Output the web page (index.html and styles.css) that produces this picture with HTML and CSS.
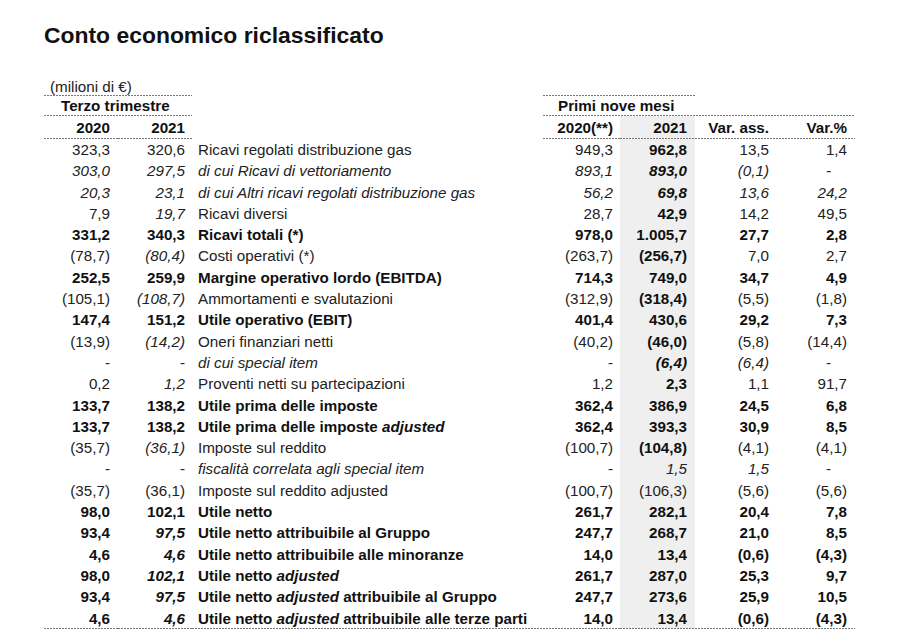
FILE: index.html
```html
<!DOCTYPE html>
<html lang="it">
<head>
<meta charset="utf-8">
<title>Conto economico riclassificato</title>
<link rel="stylesheet" href="styles.css">
</head>
<body>
<div class="page">
  <h1 class="title">Conto economico riclassificato</h1>
  <table class="ce">
    <colgroup>
      <col class="w-q"><col class="w-q2"><col class="w-label"><col class="w-p1"><col class="w-p2"><col class="w-v1"><col class="w-v2">
    </colgroup>
    <thead>
      <tr class="h-a">
        <td colspan="2" class="unit dl">(milioni di €)</td>
        <td></td>
        <td colspan="2" class="dl"></td>
        <td colspan="2"></td>
      </tr>
      <tr class="h-b">
        <td colspan="2" class="grp grp-l dl">Terzo trimestre</td>
        <td></td>
        <td colspan="4" class="grp grp-r dl">Primi nove mesi</td>
      </tr>
      <tr class="h-c">
        <th class="n1 dl">2020</th>
        <th class="n2 dl">2021</th>
        <th></th>
        <th class="n4 dl">2020(**)</th>
        <th class="n5 sh dl">2021</th>
        <th class="n6 dl">Var. ass.</th>
        <th class="n7 dl">Var.%</th>
      </tr>
    </thead>
    <tbody>
      <tr><td class="n1">323,3</td><td class="n2">320,6</td><td class="lb">Ricavi regolati distribuzione gas</td><td class="n4">949,3</td><td class="n5 sh b">962,8</td><td class="n6">13,5</td><td class="n7">1,4</td></tr>
      <tr class="i"><td class="n1">303,0</td><td class="n2">297,5</td><td class="lb">di cui Ricavi di vettoriamento</td><td class="n4">893,1</td><td class="n5 sh b">893,0</td><td class="n6">(0,1)</td><td class="n7 dash">-</td></tr>
      <tr class="i"><td class="n1">20,3</td><td class="n2">23,1</td><td class="lb">di cui Altri ricavi regolati distribuzione gas</td><td class="n4">56,2</td><td class="n5 sh b">69,8</td><td class="n6">13,6</td><td class="n7">24,2</td></tr>
      <tr><td class="n1">7,9</td><td class="n2 i">19,7</td><td class="lb">Ricavi diversi</td><td class="n4">28,7</td><td class="n5 sh b">42,9</td><td class="n6">14,2</td><td class="n7">49,5</td></tr>
      <tr class="b"><td class="n1">331,2</td><td class="n2">340,3</td><td class="lb">Ricavi totali (*)</td><td class="n4">978,0</td><td class="n5 sh">1.005,7</td><td class="n6">27,7</td><td class="n7">2,8</td></tr>
      <tr><td class="n1">(78,7)</td><td class="n2 i">(80,4)</td><td class="lb">Costi operativi (*)</td><td class="n4">(263,7)</td><td class="n5 sh b">(256,7)</td><td class="n6">7,0</td><td class="n7">2,7</td></tr>
      <tr class="b"><td class="n1">252,5</td><td class="n2">259,9</td><td class="lb">Margine operativo lordo (EBITDA)</td><td class="n4">714,3</td><td class="n5 sh">749,0</td><td class="n6">34,7</td><td class="n7">4,9</td></tr>
      <tr><td class="n1">(105,1)</td><td class="n2 i">(108,7)</td><td class="lb">Ammortamenti e svalutazioni</td><td class="n4">(312,9)</td><td class="n5 sh b">(318,4)</td><td class="n6">(5,5)</td><td class="n7">(1,8)</td></tr>
      <tr class="b"><td class="n1">147,4</td><td class="n2">151,2</td><td class="lb">Utile operativo (EBIT)</td><td class="n4">401,4</td><td class="n5 sh">430,6</td><td class="n6">29,2</td><td class="n7">7,3</td></tr>
      <tr><td class="n1">(13,9)</td><td class="n2 i">(14,2)</td><td class="lb">Oneri finanziari netti</td><td class="n4">(40,2)</td><td class="n5 sh b">(46,0)</td><td class="n6">(5,8)</td><td class="n7">(14,4)</td></tr>
      <tr><td class="n1">-</td><td class="n2">-</td><td class="lb i">di cui special item</td><td class="n4">-</td><td class="n5 sh b i">(6,4)</td><td class="n6 i">(6,4)</td><td class="n7 dash">-</td></tr>
      <tr><td class="n1">0,2</td><td class="n2 i">1,2</td><td class="lb">Proventi netti su partecipazioni</td><td class="n4">1,2</td><td class="n5 sh b">2,3</td><td class="n6">1,1</td><td class="n7">91,7</td></tr>
      <tr class="b"><td class="n1">133,7</td><td class="n2">138,2</td><td class="lb">Utile prima delle imposte</td><td class="n4">362,4</td><td class="n5 sh">386,9</td><td class="n6">24,5</td><td class="n7">6,8</td></tr>
      <tr class="b"><td class="n1">133,7</td><td class="n2">138,2</td><td class="lb">Utile prima delle imposte <i>adjusted</i></td><td class="n4">362,4</td><td class="n5 sh">393,3</td><td class="n6">30,9</td><td class="n7">8,5</td></tr>
      <tr><td class="n1">(35,7)</td><td class="n2 i">(36,1)</td><td class="lb">Imposte sul reddito</td><td class="n4">(100,7)</td><td class="n5 sh b">(104,8)</td><td class="n6">(4,1)</td><td class="n7">(4,1)</td></tr>
      <tr><td class="n1">-</td><td class="n2">-</td><td class="lb i">fiscalità correlata agli special item</td><td class="n4">-</td><td class="n5 sh i">1,5</td><td class="n6 i">1,5</td><td class="n7 dash">-</td></tr>
      <tr><td class="n1">(35,7)</td><td class="n2">(36,1)</td><td class="lb">Imposte sul reddito adjusted</td><td class="n4">(100,7)</td><td class="n5 sh">(106,3)</td><td class="n6">(5,6)</td><td class="n7">(5,6)</td></tr>
      <tr class="b"><td class="n1">98,0</td><td class="n2">102,1</td><td class="lb">Utile netto</td><td class="n4">261,7</td><td class="n5 sh">282,1</td><td class="n6">20,4</td><td class="n7">7,8</td></tr>
      <tr class="b"><td class="n1">93,4</td><td class="n2 i">97,5</td><td class="lb">Utile netto attribuibile al Gruppo</td><td class="n4">247,7</td><td class="n5 sh">268,7</td><td class="n6">21,0</td><td class="n7">8,5</td></tr>
      <tr class="b"><td class="n1">4,6</td><td class="n2 i">4,6</td><td class="lb">Utile netto attribuibile alle minoranze</td><td class="n4">14,0</td><td class="n5 sh">13,4</td><td class="n6">(0,6)</td><td class="n7">(4,3)</td></tr>
      <tr class="b"><td class="n1">98,0</td><td class="n2 i">102,1</td><td class="lb">Utile netto <i>adjusted</i></td><td class="n4">261,7</td><td class="n5 sh">287,0</td><td class="n6">25,3</td><td class="n7">9,7</td></tr>
      <tr class="b"><td class="n1">93,4</td><td class="n2 i">97,5</td><td class="lb">Utile netto <i>adjusted</i> attribuibile al Gruppo</td><td class="n4">247,7</td><td class="n5 sh">273,6</td><td class="n6">25,9</td><td class="n7">10,5</td></tr>
      <tr class="b last"><td class="n1 dl">4,6</td><td class="n2 i dl">4,6</td><td class="lb dl">Utile netto <i>adjusted</i> attribuibile alle terze parti</td><td class="n4 dl">14,0</td><td class="n5 sh dl">13,4</td><td class="n6 dl">(0,6)</td><td class="n7 dl">(4,3)</td></tr>
    </tbody>
  </table>
</div>
</body>
</html>
```
FILE: styles.css
```css
html, body {
  margin: 0;
  padding: 0;
  background: #ffffff;
}

.page {
  padding: 21px 0 0 44px;
  font-family: "Liberation Sans", Arial, sans-serif;
  color: #222222;
}

.title {
  margin: 0;
  font-size: 22.9px;
  line-height: 28px;
  font-weight: bold;
  color: #111111;
}

.ce {
  margin-top: 29px;
  border-collapse: collapse;
  table-layout: fixed;
  width: 811px;
  font-size: 15.2px;
}

.w-q { width: 74px; }
.w-q2 { width: 74px; }
.w-label { width: 351px; }
.w-p1 { width: 77px; }
.w-p2 { width: 75px; }
.w-v1 { width: 81px; }
.w-v2 { width: 79px; }

.ce td, .ce th {
  padding: 0;
  white-space: nowrap;
  vertical-align: middle;
  font-weight: normal;
}

.h-a td { height: 18px; line-height: 18px; }
.h-b td { height: 20px; line-height: 20px; }
.h-c th { height: 23px; line-height: 23px; font-weight: bold; color: #111111; }

.ce tbody td { height: 21.3px; line-height: 21.3px; }

.unit { padding-left: 6px !important; }
.grp { font-weight: bold !important; color: #111111; }
.grp-l { padding-left: 17px !important; }
.grp-r { padding-left: 15px !important; }

.n1 { text-align: right; padding-right: 8px !important; }
.n2 { text-align: right; padding-right: 7px !important; }
.lb { text-align: left; padding-left: 6px !important; }
.n4 { text-align: right; padding-right: 7px !important; }
.n5 { text-align: right; padding-right: 8px !important; }
.n6 { text-align: right; padding-right: 7px !important; }
.n7 { text-align: right; padding-right: 8px !important; }
.n7.dash { padding-right: 24px !important; }

.sh { background-color: #efefef; }

.b, .b td { font-weight: bold !important; color: #111111; }
.i, .i td { font-style: italic; }

.dl {
  background-image: linear-gradient(to right, #777777 2px, transparent 2px);
  background-size: 3px 1px;
  background-repeat: repeat-x;
  background-position: left bottom;
}
```
